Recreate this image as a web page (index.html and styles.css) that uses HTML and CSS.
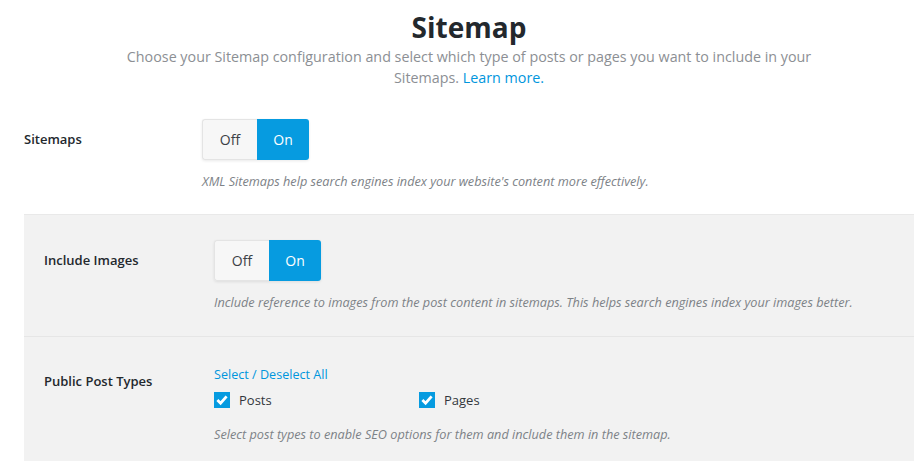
FILE: index.html
```html
<!DOCTYPE html>
<html lang="en">
<head>
<meta charset="utf-8">
<title>Sitemap</title>
<link rel="stylesheet" href="styles.css">
</head>
<body>
<div class="page">
  <header class="intro">
    <h1 class="title">Sitemap</h1>
    <p class="lead">Choose your Sitemap configuration and select which type of posts or pages you want to include in your<br>Sitemaps. <a class="link" href="#">Learn more.</a></p>
  </header>

  <div class="row row-plain">
    <div class="label">Sitemaps</div>
    <div class="control">
      <div class="toggle">
        <span class="toggle-btn toggle-off">Off</span>
        <span class="toggle-btn toggle-on">On</span>
      </div>
      <p class="desc">XML Sitemaps help search engines index your website's content more effectively.</p>
    </div>
  </div>

  <section class="panel">
    <div class="row row-panel">
      <div class="label">Include Images</div>
      <div class="control">
        <div class="toggle">
          <span class="toggle-btn toggle-off">Off</span>
          <span class="toggle-btn toggle-on">On</span>
        </div>
        <p class="desc">Include reference to images from the post content in sitemaps. This helps search engines index your images better.</p>
      </div>
    </div>
    <div class="row row-panel row-types">
      <div class="label label-tight">Public Post Types</div>
      <div class="control">
        <div class="select-all"><a class="link" href="#">Select</a> / <a class="link" href="#">Deselect All</a></div>
        <div class="checks">
          <label class="check"><span class="box"><svg viewBox="0 0 16 16" width="16" height="16"><path d="M3.4 8 L6.6 11.2 L12.6 4.4" fill="none" stroke="#fff" stroke-width="2.8"/></svg></span>Posts</label>
          <label class="check"><span class="box"><svg viewBox="0 0 16 16" width="16" height="16"><path d="M3.4 8 L6.6 11.2 L12.6 4.4" fill="none" stroke="#fff" stroke-width="2.8"/></svg></span>Pages</label>
        </div>
        <p class="desc desc-types">Select post types to enable SEO options for them and include them in the sitemap.</p>
      </div>
    </div>
  </section>
</div>
</body>
</html>
```

FILE: styles.css
```css
* { box-sizing: border-box; }

html, body {
  margin: 0;
  padding: 0;
  background: #ffffff;
}

body {
  font-family: "Open Sans", "Noto Sans", "DejaVu Sans", sans-serif;
  color: #23282d;
  font-size: 13px;
}

.page {
  width: 890px;
  margin-left: 24px;
}

.intro {
  text-align: center;
}

.title {
  margin: 10px 0 0;
  font-size: 28px;
  line-height: 34px;
  font-weight: 700;
  color: #23282d;
}

.lead {
  margin: 2px 0 0;
  font-size: 14.3px;
  line-height: 21px;
  color: #8c8f94;
}

.link {
  color: #0096dd;
  text-decoration: none;
}

.row {
  display: flex;
  align-items: flex-start;
}

.row-plain {
  margin-top: 31px;
}

.row-plain .label {
  width: 178px;
}

.label {
  flex: none;
  margin-top: 10px;
  font-size: 13px;
  line-height: 20px;
  font-weight: 600;
  color: #23282d;
}

.label-tight {
  margin-top: 5px;
}

.control {
  flex: 1;
}

.toggle {
  display: inline-flex;
  height: 41px;
  border-radius: 3px;
  box-shadow: 0 1px 3px rgba(0, 0, 0, 0.09);
}

.toggle-btn {
  display: flex;
  align-items: center;
  justify-content: center;
  font-size: 14px;
}

.toggle-off {
  width: 55px;
  background: #f7f7f7;
  border: 1px solid #e4e4e4;
  border-right: none;
  border-radius: 3px 0 0 3px;
  color: #3c4146;
}

.toggle-on {
  width: 52px;
  background: #069be0;
  color: #ffffff;
  border-radius: 0 3px 3px 0;
}

.desc {
  margin: 12px 0 0;
  font-size: 12.7px;
  line-height: 18px;
  font-style: italic;
  color: #7d8287;
}

.panel {
  margin-top: 24px;
  background: #f2f2f2;
  border-top: 1px solid #e9e9e9;
  padding: 0 20px;
}

.row-panel .label {
  width: 170px;
}

.row-panel {
  padding-top: 25px;
  padding-bottom: 25px;
}

.row-panel + .row-panel {
  border-top: 1px solid #e6e6e6;
  margin: 0 -20px;
  padding: 29px 20px 30px;
}

.select-all {
  font-size: 12.6px;
  line-height: 18px;
  color: #0096dd;
}

.checks {
  display: grid;
  grid-template-columns: 205px 205px;
  margin-top: 6px;
}

.check {
  display: flex;
  align-items: center;
  height: 20px;
  font-size: 13px;
  color: #32373c;
}

.box {
  width: 16px;
  height: 16px;
  margin-right: 9px;
  background: #069be0;
  display: inline-flex;
}

.desc-types {
  margin-top: 15px;
}
```
